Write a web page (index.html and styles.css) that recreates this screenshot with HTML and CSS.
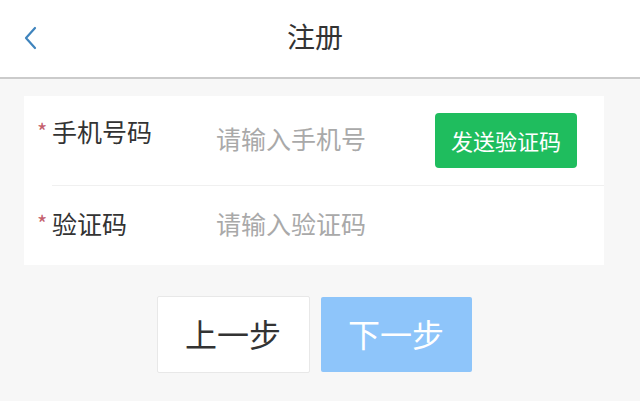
FILE: index.html
```html
<!DOCTYPE html>
<html lang="zh-CN">
<head>
    <meta charset="UTF-8">
    <meta name="viewport" content="width=device-width, initial-scale=1.0">
    <title>注册</title>
    <link rel="stylesheet" href="styles.css">
</head>
<body>

    <div class="header">
        <a class="back" href="#">
            <svg width="14" height="24" viewBox="0 0 14 24">
                <path d="M12 2 L3 12 L12 22" fill="none" stroke="#3f84bd" stroke-width="2.2" stroke-linecap="round" stroke-linejoin="round"/>
            </svg>
        </a>
        <h1>注册</h1>
    </div>

    <div class="page">
        <form class="card">
            <div class="row row-phone">
                <label class="label" for="phone"><span class="star">*</span>手机号码</label>
                <input type="text" id="phone" class="field" placeholder="请输入手机号">
                <button type="button" class="send-btn">发送验证码</button>
            </div>
            <div class="row row-code">
                <label class="label" for="code"><span class="star">*</span>验证码</label>
                <input type="text" id="code" class="field" placeholder="请输入验证码">
            </div>
        </form>

        <div class="actions">
            <button type="button" class="step-btn prev-btn">上一步</button>
            <button type="button" class="step-btn next-btn">下一步</button>
        </div>
    </div>

</body>
</html>
```

FILE: styles.css
```css
body {
    font-family: "Noto Sans CJK SC", "Noto Sans", sans-serif;
    background-color: #f7f7f7;
    color: #333;
    margin: 0;
    padding: 0;
}

.header {
    height: 77px;
    background-color: #fff;
    border-bottom: 2px solid #cbcbcb;
    display: flex;
    align-items: center;
    justify-content: center;
    position: relative;
}

.back {
    position: absolute;
    left: 23px;
    top: 26px;
    display: block;
    line-height: 0;
}

h1 {
    margin: 0;
    font-size: 28px;
    font-weight: normal;
    color: #333;
    line-height: 1;
    margin-left: -10px;
    margin-top: -5px;
}

.page {
    padding: 17px 36px 0 24px;
}

.card {
    background-color: #fff;
    margin: 0;
}

.row {
    display: flex;
    align-items: center;
    padding-left: 14px;
}

.row-phone {
    height: 89px;
    border-bottom: 1px solid #f0f0f0;
    margin-left: 28px;
    padding-left: 0;
}

.row-phone .label {
    margin-left: -14px;
    padding-bottom: 19px;
}

.row-code {
    height: 79px;
}

.label {
    width: 178px;
    flex-shrink: 0;
    font-size: 25px;
    line-height: 1;
    color: #333;
    display: flex;
    align-items: flex-start;
    padding-bottom: 5px;
}

.star {
    color: #c4606c;
    font-size: 22px;
    width: 15px;
    margin-top: 0;
    margin-left: -1px;
}

.field {
    flex: 1;
    min-width: 0;
    border: none;
    outline: none;
    background: transparent;
    font-family: inherit;
    font-size: 25px;
    color: #333;
    padding: 0 0 5px;
}

.field::placeholder {
    color: #a9a9a9;
}

.send-btn {
    width: 142px;
    height: 55px;
    margin-right: 27px;
    background-color: #1fbd5e;
    color: #fff;
    border: none;
    border-radius: 4px;
    font-family: inherit;
    font-size: 22px;
    padding: 0 0 2px;
    cursor: pointer;
}

.actions {
    display: flex;
    justify-content: center;
    gap: 11px;
    margin-top: 31px;
}

.step-btn {
    width: 153px;
    height: 77px;
    font-family: inherit;
    font-size: 32px;
    border-radius: 2px;
    padding: 0 0 4px;
    cursor: pointer;
}

.prev-btn {
    background-color: #fff;
    color: #333;
    border: 1px solid #e8e8e8;
}

.next-btn {
    background-color: #8ec5fa;
    color: #fff;
    border: none;
    height: 75px;
    width: 151px;
    margin-top: 1px;
}
```
